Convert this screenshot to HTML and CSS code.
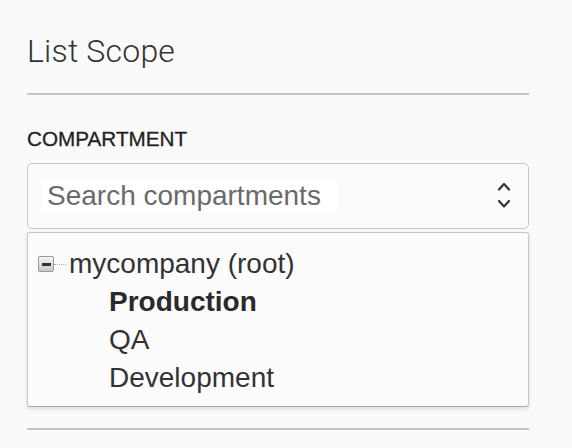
FILE: index.html
```html
<!DOCTYPE html>
<html>
<head>
<meta charset="utf-8">
<link rel="stylesheet" href="styles.css">
</head>
<body>
<div class="panel">
  <h1 class="title">List Scope</h1>
  <div class="divider"></div>
  <div class="label">COMPARTMENT</div>
  <div class="select">
    <span class="placeholder">Search compartments</span>
    <svg class="chev" width="14" height="30" viewBox="0 0 14 30">
      <path d="M2 8.5 L7 3 L12 8.5" fill="none" stroke="#333" stroke-width="2.2" stroke-linecap="round" stroke-linejoin="round"/>
      <path d="M2 20 L7 25.5 L12 20" fill="none" stroke="#333" stroke-width="2.2" stroke-linecap="round" stroke-linejoin="round"/>
    </svg>
  </div>
  <div class="dropdown">
    <div class="row root">
      <span class="toggle"><span class="bar"></span></span>
      <span class="dots"></span>
      <span class="name">mycompany (root)</span>
    </div>
    <div class="row child selected">Production</div>
    <div class="row child">QA</div>
    <div class="row child">Development</div>
  </div>
  <div class="divider bottom"></div>
</div>
</body>
</html>
```

FILE: styles.css
```css
html, body {
  margin: 0;
  padding: 0;
  background: #fafafa;
}
body {
  font-family: "Liberation Sans", Arial, sans-serif;
  color: #333;
}
.panel {
  width: 502px;
  padding: 31px 0 0 27px;
}
.title {
  margin: 0;
  font-family: Roboto, "Liberation Sans", sans-serif;
  font-weight: 300;
  font-size: 32px;
  line-height: 40px;
  color: #333;
  letter-spacing: 0.2px;
}
.divider {
  margin-top: 22px;
  height: 2px;
  background: #c6c6c6;
}
.label {
  margin-top: 32px;
  font-size: 20.7px;
  line-height: 24px;
  color: #222;
  -webkit-text-stroke: 0.3px #222;
}
.select {
  margin-top: 12px;
  height: 64px;
  border: 1px solid #c4c4c4;
  border-radius: 5px;
  background: #fbfbfb;
  display: flex;
  align-items: center;
  justify-content: space-between;
  padding: 0 17px 0 14px;
}
.placeholder {
  background: #fff;
  padding: 0 17px 0 5px;
  font-size: 28px;
  line-height: 34px;
  color: #6a6a6a;
}
.chev {
  display: block;
}
.dropdown {
  margin-top: 3px;
  border: 1px solid #c6c6c6;
  border-bottom-color: #aaa;
  border-radius: 3px;
  background: #fcfcfc;
  box-shadow: 0 2px 4px rgba(0, 0, 0, 0.12);
  padding: 12px 0 9px 0;
}
.row {
  font-size: 28px;
  line-height: 38px;
  color: #333;
  white-space: nowrap;
}
.root {
  display: flex;
  align-items: center;
  padding-left: 10px;
}
.toggle {
  width: 14px;
  height: 14px;
  border: 1px solid #9a9a9a;
  border-radius: 2px;
  background: linear-gradient(#f4f4f4, #c9c9c9);
  display: flex;
  align-items: center;
  justify-content: center;
  flex: none;
}
.bar {
  width: 9px;
  height: 3px;
  background: #333;
}
.dots {
  width: 12px;
  border-top: 1px dotted #aaa;
  margin-right: 3px;
  flex: none;
}
.child {
  padding-left: 81px;
}
.selected {
  font-weight: bold;
  color: #2a2a2a;
}
.divider.bottom {
  margin-top: 21px;
}
```
